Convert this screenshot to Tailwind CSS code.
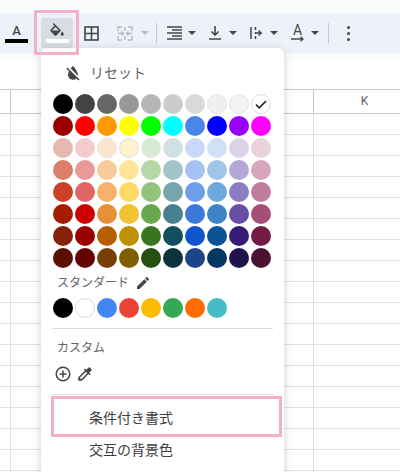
<!DOCTYPE html>
<html lang="ja">
<head>
<meta charset="UTF-8" />
<title>Sheets</title>
<script src="https://cdn.jsdelivr.net/npm/@tailwindcss/browser@4"></script>
</head>
<body class="m-0 bg-white">
<div class="relative w-[400px] h-[472px] overflow-hidden bg-white font-['Roboto','Noto_Sans_CJK_JP',sans-serif] text-[#444746]">

    <!-- toolbar -->
    <div class="h-[13px] bg-[#f9fbfd]"></div>
    <div class="h-[40px] bg-[#edf2fa] flex items-center pl-[5px]">
        <div class="w-[23px] h-[30px] flex flex-col items-center justify-end pb-[5px]">
            <span class="text-[13px] leading-[14px] font-medium">A</span>
            <div class="w-[23px] h-[4px] bg-black mt-[1px] shrink-0"></div>
        </div>
        <div class="ml-[13px] w-[32px] h-[30px] rounded-[3px] bg-[#d9dde3] flex flex-col items-center justify-end pb-[5px]">
            <svg width="18" height="14" viewBox="0 0 24 18.67" fill="#444746"><path d="M16.56 8.94L7.62 0 6.21 1.41l2.38 2.38-5.15 5.15c-.59.59-.59 1.54 0 2.12l5.5 5.5c.29.29.68.44 1.06.44s.77-.15 1.06-.44l5.5-5.5c.59-.58.59-1.53 0-2.12zM5.21 10L10 5.21 14.79 10H5.21zM19 11.5s-2 2.17-2 3.5c0 1.1.9 2 2 2s2-.9 2-2c0-1.33-2-3.5-2-3.5z"/></svg>
            <div class="w-[23px] h-[4px] bg-white mt-[2px] shrink-0"></div>
        </div>
        <svg class="ml-[11px]" width="15" height="15" viewBox="0 0 15 15" fill="none" stroke="#444746" stroke-width="1.6"><rect x="1" y="1" width="13" height="13"/><path d="M7.5 1V14M1 7.5H14"/></svg>
        <svg class="ml-[18px]" width="16" height="15" viewBox="0 0 16 15" fill="none" stroke="#b4b9bf" stroke-width="1.4"><path d="M1 5V1H5M11 1H15V5M1 10V14H5M11 14H15V10M8 1V5M8 10V14M1 7.5H6M4.5 5.5L6.5 7.5L4.5 9.5M15 7.5H10M11.5 5.5L9.5 7.5L11.5 9.5"/></svg>
        <svg class="ml-[8px]" width="8" height="4" viewBox="0 0 8 4"><path d="M0 0H8L4 4Z" fill="#b4b9bf"/></svg>
        <div class="ml-[7px] w-px h-[20px] bg-[#c7c7c7]"></div>
        <svg class="ml-[10px]" width="15" height="14" viewBox="0 0 15 14" fill="none" stroke="#444746" stroke-width="1.4"><path d="M0 1H15M5 4H15M0 7H15M5 10H15M0 13H15"/></svg>
        <svg class="ml-[6px]" width="8" height="4" viewBox="0 0 8 4"><path d="M0 0H8L4 4Z" fill="#444746"/></svg>
        <svg class="ml-[13px]" width="12" height="14" viewBox="0 0 12 14" fill="none" stroke="#444746" stroke-width="1.6"><path d="M6 0V9M2.5 5.5L6 9.2L9.5 5.5M0 13H12"/></svg>
        <svg class="ml-[8px]" width="8" height="4" viewBox="0 0 8 4"><path d="M0 0H8L4 4Z" fill="#444746"/></svg>
        <svg class="ml-[13px]" width="12" height="14" viewBox="0 0 12 14" fill="none" stroke="#444746" stroke-width="1.5"><path d="M1 1V13M5.5 1V4M5.5 6V8M5.5 10V13M5 7H11M8.5 4.5L11.2 7L8.5 9.5"/></svg>
        <svg class="ml-[8px]" width="8" height="4" viewBox="0 0 8 4"><path d="M0 0H8L4 4Z" fill="#444746"/></svg>
        <div class="ml-[13px] w-[13px] flex flex-col items-center">
            <span class="text-[14px] leading-[11px]">A</span>
            <svg width="13" height="6" viewBox="0 0 13 6" fill="none" stroke="#444746" stroke-width="1.3"><path d="M0 3H12M9.5 0.8L12 3L9.5 5.2"/></svg>
        </div>
        <svg class="ml-[7px]" width="8" height="4" viewBox="0 0 8 4"><path d="M0 0H8L4 4Z" fill="#444746"/></svg>
        <div class="ml-[9px] w-px h-[20px] bg-[#c7c7c7]"></div>
        <div class="ml-[18px] flex flex-col gap-[3px]">
            <div class="w-[3px] h-[3px] rounded-full bg-[#444746]"></div>
            <div class="w-[3px] h-[3px] rounded-full bg-[#444746]"></div>
            <div class="w-[3px] h-[3px] rounded-full bg-[#444746]"></div>
        </div>
    </div>
    <div class="h-[7px] bg-[#f9fbfd]"></div>

    <!-- sheet grid -->
    <div class="mt-[29px] h-[25px] flex border-y border-[#c7c7c7]">
        <div class="w-[10px] shrink-0"></div>
        <div class="w-[303px] shrink-0 border-l border-[#c7c7c7]"></div>
        <div class="w-[102px] shrink-0 border-l border-[#c7c7c7] text-[12px] leading-[23px] text-center text-[#5f6368]">K</div>
    </div>
    <div class="h-[358px] flex bg-[repeating-linear-gradient(to_bottom,transparent_0,transparent_20px,#e1e1e1_20px,#e1e1e1_21px)]">
        <div class="w-[10px] shrink-0"></div>
        <div class="w-[303px] shrink-0 border-l border-[#e1e1e1]"></div>
        <div class="w-[102px] shrink-0 border-l border-[#e1e1e1]"></div>
    </div>

    <!-- colour menu -->
    <div class="absolute left-[41px] top-[48px] w-[243px] h-[440px] bg-white rounded-[6px] shadow-[0_2px_8px_rgba(60,64,67,0.25)]">
        <div class="h-[46px] flex items-center pl-[22px] pt-[4px]">
            <svg width="20" height="20" viewBox="0 0 24 24" fill="#444746"><path d="M18 14c0-4-6-10.8-6-10.8s-1.33 1.51-2.73 3.52l8.59 8.59c.09-.42.14-.86.14-1.31zm-.88 3.12L12.5 12.5 5.27 5.27 4 6.55l3.32 3.32C6.55 11.32 6 12.79 6 14c0 3.31 2.69 6 6 6 1.52 0 2.9-.57 3.96-1.5l2.63 2.63 1.27-1.27-2.74-2.74z"/></svg>
            <span class="ml-[7px] text-[14px] text-[#5f6368]">リセット</span>
        </div>

        <div class="ml-[12px] grid grid-cols-[repeat(10,20px)] gap-[2px]">
            <span class="size-5 rounded-full bg-[#000000]"></span><span class="size-5 rounded-full bg-[#434343]"></span><span class="size-5 rounded-full bg-[#666666]"></span><span class="size-5 rounded-full bg-[#999999]"></span><span class="size-5 rounded-full bg-[#b7b7b7]"></span><span class="size-5 rounded-full bg-[#cccccc]"></span><span class="size-5 rounded-full bg-[#d9d9d9]"></span><span class="size-5 rounded-full bg-[#efefef] border border-[#e3e3e3]"></span><span class="size-5 rounded-full bg-[#f3f3f3] border border-[#e3e3e3]"></span>
            <span class="size-5 rounded-full bg-white border border-[#dadce0] flex items-center justify-center"><svg width="12" height="9" viewBox="0 0 12 9" fill="none" stroke="#202124" stroke-width="1.6"><path d="M1 4.5L4.2 7.8L11 1"/></svg></span>

            <span class="size-5 rounded-full bg-[#980000]"></span><span class="size-5 rounded-full bg-[#ff0000]"></span><span class="size-5 rounded-full bg-[#ff9900]"></span><span class="size-5 rounded-full bg-[#ffff00]"></span><span class="size-5 rounded-full bg-[#00ff00]"></span><span class="size-5 rounded-full bg-[#00ffff]"></span><span class="size-5 rounded-full bg-[#4a86e8]"></span><span class="size-5 rounded-full bg-[#0000ff]"></span><span class="size-5 rounded-full bg-[#9900ff]"></span><span class="size-5 rounded-full bg-[#ff00ff]"></span>

            <span class="size-5 rounded-full bg-[#e6b8af]"></span><span class="size-5 rounded-full bg-[#f4cccc]"></span><span class="size-5 rounded-full bg-[#fce5cd] border border-[#e3e3e3]"></span><span class="size-5 rounded-full bg-[#fff2cc] border border-[#e3e3e3]"></span><span class="size-5 rounded-full bg-[#d9ead3]"></span><span class="size-5 rounded-full bg-[#d0e0e3]"></span><span class="size-5 rounded-full bg-[#c9daf8]"></span><span class="size-5 rounded-full bg-[#cfe2f3]"></span><span class="size-5 rounded-full bg-[#d9d2e9]"></span><span class="size-5 rounded-full bg-[#ead1dc]"></span>

            <span class="size-5 rounded-full bg-[#dd7e6b]"></span><span class="size-5 rounded-full bg-[#ea9999]"></span><span class="size-5 rounded-full bg-[#f9cb9c]"></span><span class="size-5 rounded-full bg-[#ffe599]"></span><span class="size-5 rounded-full bg-[#b6d7a8]"></span><span class="size-5 rounded-full bg-[#a2c4c9]"></span><span class="size-5 rounded-full bg-[#a4c2f4]"></span><span class="size-5 rounded-full bg-[#9fc5e8]"></span><span class="size-5 rounded-full bg-[#b4a7d6]"></span><span class="size-5 rounded-full bg-[#d5a6bd]"></span>

            <span class="size-5 rounded-full bg-[#cc4125]"></span><span class="size-5 rounded-full bg-[#e06666]"></span><span class="size-5 rounded-full bg-[#f6b26b]"></span><span class="size-5 rounded-full bg-[#ffd966]"></span><span class="size-5 rounded-full bg-[#93c47d]"></span><span class="size-5 rounded-full bg-[#76a5af]"></span><span class="size-5 rounded-full bg-[#6d9eeb]"></span><span class="size-5 rounded-full bg-[#6fa8dc]"></span><span class="size-5 rounded-full bg-[#8e7cc3]"></span><span class="size-5 rounded-full bg-[#c27ba0]"></span>

            <span class="size-5 rounded-full bg-[#a61c00]"></span><span class="size-5 rounded-full bg-[#cc0000]"></span><span class="size-5 rounded-full bg-[#e69138]"></span><span class="size-5 rounded-full bg-[#f1c232]"></span><span class="size-5 rounded-full bg-[#6aa84f]"></span><span class="size-5 rounded-full bg-[#45818e]"></span><span class="size-5 rounded-full bg-[#3c78d8]"></span><span class="size-5 rounded-full bg-[#3d85c6]"></span><span class="size-5 rounded-full bg-[#674ea7]"></span><span class="size-5 rounded-full bg-[#a64d79]"></span>

            <span class="size-5 rounded-full bg-[#85200c]"></span><span class="size-5 rounded-full bg-[#990000]"></span><span class="size-5 rounded-full bg-[#b45f06]"></span><span class="size-5 rounded-full bg-[#bf9000]"></span><span class="size-5 rounded-full bg-[#38761d]"></span><span class="size-5 rounded-full bg-[#134f5c]"></span><span class="size-5 rounded-full bg-[#1155cc]"></span><span class="size-5 rounded-full bg-[#0b5394]"></span><span class="size-5 rounded-full bg-[#351c75]"></span><span class="size-5 rounded-full bg-[#741b47]"></span>

            <span class="size-5 rounded-full bg-[#5b0f00]"></span><span class="size-5 rounded-full bg-[#660000]"></span><span class="size-5 rounded-full bg-[#783f04]"></span><span class="size-5 rounded-full bg-[#7f6000]"></span><span class="size-5 rounded-full bg-[#274e13]"></span><span class="size-5 rounded-full bg-[#0c343d]"></span><span class="size-5 rounded-full bg-[#1c4587]"></span><span class="size-5 rounded-full bg-[#073763]"></span><span class="size-5 rounded-full bg-[#20124d]"></span><span class="size-5 rounded-full bg-[#4c1130]"></span>
        </div>

        <div class="ml-[16px] mt-[5px] h-[20px] flex items-center">
            <span class="text-[12px] text-[#5f6368]">スタンダード</span>
            <svg class="ml-[6px]" width="16" height="16" viewBox="0 0 24 24" fill="#444746"><path d="M3 17.25V21h3.75L17.81 9.94l-3.75-3.75L3 17.25zM20.71 7.04c.39-.39.39-1.02 0-1.41l-2.34-2.34c-.39-.39-1.02-.39-1.41 0l-1.83 1.83 3.75 3.75 1.83-1.83z"/></svg>
        </div>

        <div class="ml-[12px] mt-[5px] flex gap-[2px]">
            <span class="size-5 rounded-full bg-[#000000]"></span><span class="size-5 rounded-full bg-white border border-[#dadce0]"></span><span class="size-5 rounded-full bg-[#4285f4]"></span><span class="size-5 rounded-full bg-[#ea4335]"></span><span class="size-5 rounded-full bg-[#fbbc04]"></span><span class="size-5 rounded-full bg-[#34a853]"></span><span class="size-5 rounded-full bg-[#ff6d01]"></span><span class="size-5 rounded-full bg-[#46bdc6]"></span>
        </div>

        <div class="mx-[11px] mt-[10px] h-px bg-[#dadce0]"></div>

        <div class="ml-[16px] mt-[10px] h-[18px] text-[12px] leading-[18px] text-[#5f6368]">カスタム</div>
        <div class="ml-[14px] mt-[9px] h-[16px] flex items-center gap-[5px]">
            <svg width="16" height="16" viewBox="0 0 16 16" fill="none" stroke="#444746" stroke-width="1.5"><circle cx="8" cy="8" r="6.8"/><path d="M8 4.5V11.5M4.5 8H11.5"/></svg>
            <svg width="18" height="18" viewBox="0 0 24 24" fill="#444746"><path d="M20.71 5.63l-2.34-2.34c-.39-.39-1.02-.39-1.41 0l-3.12 3.12-1.93-1.91-1.41 1.41 1.42 1.42L3 16.25V21h4.75l8.92-8.92 1.42 1.42 1.41-1.41-1.92-1.92 3.12-3.12c.4-.4.4-1.03.01-1.42zM6.92 19L5 17.08l8.06-8.06 1.92 1.92L6.92 19z"/></svg>
        </div>

        <div class="mx-[11px] mt-[12px] h-px bg-[#dadce0]"></div>

        <div class="mt-[3px] h-[40px] pl-[48px] text-[14px] leading-[40px] text-[#3c4043]">条件付き書式</div>
        <div class="h-[30px] pl-[48px] text-[14px] leading-[24px] text-[#3c4043]">交互の背景色</div>
    </div>

    <!-- pink highlight boxes -->
    <div class="absolute left-[34px] top-[10px] w-[45px] h-[45px] border-[3px] border-[#f4afc9]"></div>
    <div class="absolute left-[51px] top-[396px] w-[231px] h-[41px] border-[3px] border-[#f4afc9]"></div>
</div>
</body>
</html>
